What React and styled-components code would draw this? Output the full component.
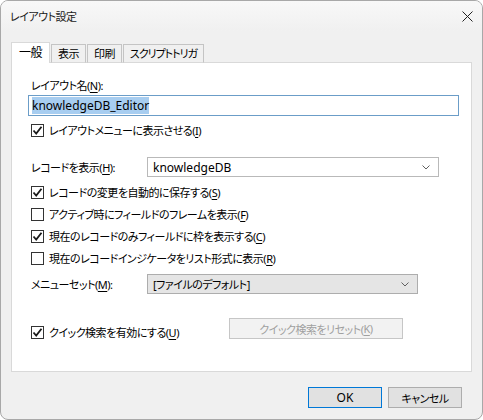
import React from "react";
import styled, { createGlobalStyle } from "styled-components";

const Global = createGlobalStyle`
  html, body { margin: 0; padding: 0; background: #ffffff; }
  body {
    font-family: "Noto Sans", "Noto Sans CJK JP", sans-serif;
    font-size: 11px;
    color: #000;
  }
  * { box-sizing: border-box; }
`;

const Window = styled.div`
  width: 483px;
  height: 420px;
  background: #f0f0f0;
  border: 1px solid #a8a8a8;
  border-radius: 8px;
  overflow: hidden;
  display: flex;
  flex-direction: column;
  font-family: "Noto Sans", "Noto Sans CJK JP", sans-serif;
  font-feature-settings: "palt";
  font-size: 11px;
  letter-spacing: -0.5px;
`;

const TitleBar = styled.div`
  height: 30px;
  flex: none;
  display: flex;
  align-items: center;
  justify-content: space-between;
  padding: 0 8px 0 9px;
  background: linear-gradient(#f8f8f8, #f0f0f0);
`;

const Title = styled.span`
  font-size: 11px;
  color: #1a1a1a;
`;

const CloseButton = styled.span`
  width: 14px;
  height: 14px;
  display: flex;
  align-items: center;
  justify-content: center;
`;

const Body = styled.div`
  padding: 11px 10px 0 10px;
  display: flex;
  flex-direction: column;
`;

const TabStrip = styled.div`
  display: flex;
  align-items: flex-end;
  height: 21px;
  position: relative;
  z-index: 1;
  margin-bottom: -1px;
`;

const Tab = styled.div`
  width: ${(p) => p.$w}px;
  height: ${(p) => (p.$active ? "21px" : "19px")};
  margin-right: 1px;
  display: flex;
  align-items: center;
  justify-content: center;
  white-space: nowrap;
  background: ${(p) => (p.$active ? "#ffffff" : "#f0f0f0")};
  border: 1px solid ${(p) => (p.$active ? "#d9d9d9" : "#c4c4c4")};
  border-bottom: ${(p) => (p.$active ? "none" : "1px solid #d9d9d9")};
  font-size: ${(p) => (p.$active ? "12px" : "11px")};
  letter-spacing: ${(p) => (p.$tight ? "-1px" : "-0.5px")};
  line-height: 1;
`;

const Panel = styled.div`
  height: 310px;
  background: #ffffff;
  border: 1px solid #d9d9d9;
  padding: 14px 0 0 19px;
  display: flex;
  flex-direction: column;
`;

const Label = styled.div`
  height: 16px;
  display: flex;
  align-items: center;
  white-space: nowrap;
`;

const Key = styled.span`
  text-decoration: underline;
  text-underline-offset: 2px;
`;

const TextInput = styled.div`
  margin: 2px 0 0 -3px;
  width: 431px;
  height: 21px;
  border: 1px solid #6b9dc8;
  background: #fff;
  display: flex;
  align-items: center;
  padding-left: 3px;
`;

const Selected = styled.span`
  background: #a7cdf0;
  padding: 1px 0;
  line-height: 15px;
  font-size: 12px;
  letter-spacing: 0;
`;

const Latin = styled.span`
  font-size: 12px;
  letter-spacing: 0;
`;

const CheckRow = styled.div`
  display: flex;
  align-items: center;
  height: ${(p) => p.$h || 22}px;
  margin-top: ${(p) => p.$mt || 0}px;
  gap: 5px;
  white-space: nowrap;
`;

const Box = styled.span`
  width: 13px;
  height: 13px;
  flex: none;
  border: 1px solid #333333;
  background: #fff;
  display: flex;
  align-items: center;
  justify-content: center;
`;

const FieldRow = styled.div`
  display: grid;
  grid-template-columns: 116px auto;
  align-items: center;
  height: 20px;
  margin-top: ${(p) => p.$mt || 0}px;
`;

const Combo = styled.div`
  width: ${(p) => p.$w}px;
  height: 20px;
  border: 1px solid ${(p) => (p.$button ? "#adadad" : "#b9b9b9")};
  background: ${(p) => (p.$button ? "#e5e5e5" : "#ffffff")};
  display: flex;
  align-items: center;
  justify-content: space-between;
  padding: 0 8px 0 5px;
  white-space: nowrap;
`;

const QuickRow = styled.div`
  display: grid;
  grid-template-columns: 198px auto;
  align-items: start;
  margin-top: 24px;
`;

const Button = styled.div`
  width: ${(p) => p.$w}px;
  height: 21px;
  display: flex;
  align-items: center;
  justify-content: center;
  white-space: nowrap;
  color: ${(p) => (p.$disabled ? "#a0a0a0" : "#000")};
  background: ${(p) => (p.$disabled ? "#f2f2f2" : "#e1e1e1")};
  border: 1px solid
    ${(p) => (p.$default ? "#0078d7" : p.$disabled ? "#c6c6c6" : "#adadad")};
`;

const Footer = styled.div`
  display: flex;
  justify-content: flex-end;
  gap: 6px;
  padding: 15px 10px 0 0;
`;

const Chevron = () => (
  <svg width="8" height="5" viewBox="0 0 8 5">
    <path d="M0.5 0.5 L4 4 L7.5 0.5" fill="none" stroke="#606060" strokeWidth="1" />
  </svg>
);

const Check = ({ on }) => (
  <Box>
    {on && (
      <svg width="11" height="11" viewBox="0 0 11 11">
        <path d="M1.5 5.5 L4.2 8.5 L9.5 1.8" fill="none" stroke="#1a1a1a" strokeWidth="1.8" />
      </svg>
    )}
  </Box>
);

const CheckItem = ({ on, children, h, mt }) => (
  <CheckRow $h={h} $mt={mt}>
    <Check on={on} />
    <span>{children}</span>
  </CheckRow>
);

export default function App() {
  return (
    <>
      <Global />
      <Window>
        <TitleBar>
          <Title>レイアウト設定</Title>
          <CloseButton>
            <svg width="11" height="11" viewBox="0 0 11 11">
              <path d="M0.5 0.5 L10.5 10.5 M10.5 0.5 L0.5 10.5" stroke="#222" strokeWidth="1" />
            </svg>
          </CloseButton>
        </TitleBar>
        <Body>
          <TabStrip>
            <Tab $active $w={39}>一般</Tab>
            <Tab $w={35}>表示</Tab>
            <Tab $w={35}>印刷</Tab>
            <Tab $w={81} $tight>スクリプトトリガ</Tab>
          </TabStrip>
          <Panel>
            <Label>
              レイアウト名(<Key>N</Key>):
            </Label>
            <TextInput>
              <Selected>knowledgeDB_Editor</Selected>
            </TextInput>
            <CheckItem on h={20} mt={4}>
              レイアウトメニューに表示させる(<Key>I</Key>)
            </CheckItem>
            <FieldRow $mt={17}>
              <Label>
                レコードを表示(<Key>H</Key>):
              </Label>
              <Combo $w={292}>
                <Latin>knowledgeDB</Latin>
                <Chevron />
              </Combo>
            </FieldRow>
            <CheckItem on mt={4}>
              レコードの変更を自動的に保存する(<Key>S</Key>)
            </CheckItem>
            <CheckItem>
              アクティブ時にフィールドのフレームを表示(<Key>F</Key>)
            </CheckItem>
            <CheckItem on>
              現在のレコードのみフィールドに枠を表示する(<Key>C</Key>)
            </CheckItem>
            <CheckItem>
              現在のレコードインジケータをリスト形式に表示(<Key>R</Key>)
            </CheckItem>
            <FieldRow $mt={5}>
              <Label>
                メニューセット(<Key>M</Key>):
              </Label>
              <Combo $w={271} $button>
                <span>[ファイルのデフォルト]</span>
                <Chevron />
              </Combo>
            </FieldRow>
            <QuickRow>
              <CheckItem on h={20} mt={4}>
                クイック検索を有効にする(<Key>U</Key>)
              </CheckItem>
              <Button $w={174} $disabled>
                クイック検索をリセット(<Key>K</Key>)
              </Button>
            </QuickRow>
          </Panel>
          <Footer>
            <Button $w={74} $default>
              <Latin>OK</Latin>
            </Button>
            <Button $w={74}>キャンセル</Button>
          </Footer>
        </Body>
      </Window>
    </>
  );
}
